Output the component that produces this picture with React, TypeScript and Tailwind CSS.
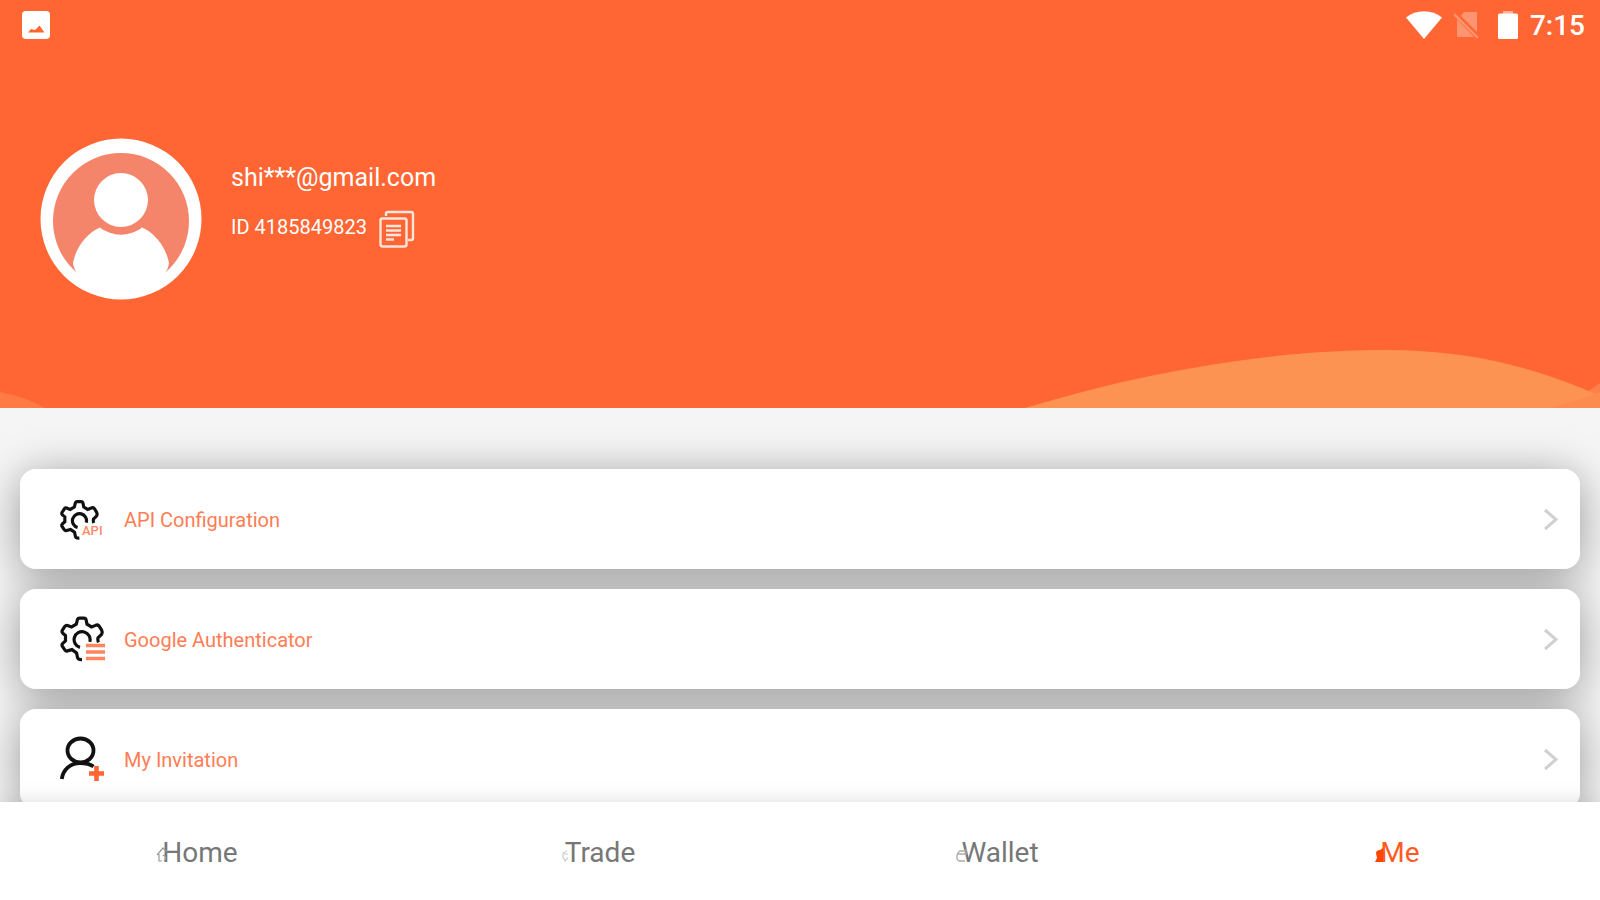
import type { ReactNode } from "react";

const GEAR =
  "M38.500 28Q37.500 26 38 23.500L41.500 20Q42.800 18 41.500 15.500L39 11.500Q37.500 10 35.500 11L31.500 12.500L27 9.800L26 5Q25.500 3.700 24 3.700H19.500Q18 3.700 17.500 5L16.300 9.800L11.500 12.500L7.500 11Q6 10.500 5 11.800L2.300 16Q1.500 17.500 2.800 18.800L5.500 21V26.500L2.800 29Q1.500 30.300 2.300 31.800L4.800 35.500Q5.800 37 7.500 36.500L12 35.200L16.500 38.500L17.500 43Q18 45.500 22 45.200M20 33A8 8 0 1 1 29.800 27.500";

function ApiIcon() {
  return (
    <svg viewBox="0 0 46 46" className="size-[46px]" aria-hidden="true">
      <path d={GEAR} transform="translate(0 2.4) scale(.88)" fill="none" stroke="#111" strokeWidth="3.6" />
      <path d="M22 28H46V46H22z" fill="#fff" />
      <text x="22" y="39" fontSize="13" fontFamily="Roboto, sans-serif" fontWeight="500" fill="#ff8a66">
        API
      </text>
    </svg>
  );
}

function AuthenticatorIcon() {
  return (
    <svg viewBox="0 0 46 46" className="size-[46px]" aria-hidden="true">
      <path d={GEAR} transform="translate(0 -1.6)" fill="none" stroke="#111" strokeWidth="3.2" />
      <path d="M26 29.500H45M26 36H45M26 42.500H45" stroke="#ff8560" strokeWidth="3.4" />
    </svg>
  );
}

function InvitationIcon() {
  return (
    <svg viewBox="0 0 46 46" className="size-[46px]" aria-hidden="true">
      <g fill="none" stroke="#111" strokeWidth="3.8">
        <ellipse cx="20.500" cy="14.500" rx="13" ry="12" />
        <path d="M1.800 43C3 34 10 27 20 27c6 0 10 1 13.500 3.500" />
      </g>
      <path d="M36.500 30V45M29 37.500H44" stroke="#ff6633" strokeWidth="4.6" />
    </svg>
  );
}

const rows: { label: string; icon: ReactNode }[] = [
  { label: "API Configuration", icon: <ApiIcon /> },
  { label: "Google Authenticator", icon: <AuthenticatorIcon /> },
  { label: "My Invitation", icon: <InvitationIcon /> },
];

const tabs: { label: string; active?: boolean; icon: ReactNode }[] = [
  {
    label: "Home",
    icon: <path d="M1 10 7 3l4 4M3 9v7h3M8 16c4-3 0-7-1-5" fill="none" stroke="#999" strokeWidth="1.2" />,
  },
  {
    label: "Trade",
    icon: <path d="M8 6 4 8v4l2 4 3-3M5 9h4" fill="none" stroke="#ccc" strokeWidth="1.2" />,
  },
  {
    label: "Wallet",
    icon: <path d="M9 6H5C1 8 1 15 4 16h6M3 9h8V4" fill="none" stroke="#aaa" strokeWidth="1.3" />,
  },
  {
    label: "Me",
    active: true,
    icon: <path d="M2 8c0-2 2-3 4-3l3-2v14H1l2-4z" fill="#ff4500" />,
  },
];

function StatusBar() {
  return (
    <div className="flex h-[50px] items-center justify-between pl-[22px] pr-[15px] text-white">
      <svg viewBox="0 0 28 28" className="size-7" aria-label="Screenshot saved" role="img">
        <rect width="28" height="28" rx="4" fill="#fff" />
        <path d="M6 21.500l3-3.500 4 1 4.500-4.500 5 7z" fill="#ff6633" />
      </svg>
      <div className="flex items-center">
        <svg viewBox="0 0 36 28" className="mr-3 h-7 w-9" aria-hidden="true">
          <path d="M0 6.500C10-2 26-2 36 6.500L18 28z" fill="#fff" />
        </svg>
        <svg viewBox="0 0 28 28" className="mr-4 h-7 w-7" aria-hidden="true">
          <path d="M10 1H23V21L7 5zM3 8V26H20z" fill="#ff9470" />
          <path d="M0 3 24 27" stroke="#ff9470" strokeWidth="2.400" />
        </svg>
        <svg viewBox="0 0 20 28" className="mr-3 h-7 w-5" aria-hidden="true">
          <path d="M5 0h10v3H5z" fill="#ffb199" />
          <rect y="2.500" width="20" height="25.500" rx="1.500" fill="#fff" />
        </svg>
        <span className="pt-0.5 text-[28px] leading-8 font-medium">7:15</span>
      </div>
    </div>
  );
}

function Avatar() {
  return (
    <svg viewBox="0 0 162 162" className="size-[162px] shrink-0" role="img" aria-label="Profile picture">
      <circle cx="81" cy="81" r="80.500" fill="#fff" />
      <circle cx="81" cy="83" r="68" fill="#f4856a" />
      <circle cx="81" cy="62" r="27" fill="#fff" />
      <path
        d="M33 125C36 109 47 95 60 89.500C72 99 90 99 102 89.500C115 95 126 109 129 125C127 142 104 155 81 155S35 142 33 125z"
        fill="#fff"
      />
    </svg>
  );
}

export default function App() {
  return (
    <div className="flex h-screen flex-col overflow-hidden bg-[#f5f5f5] font-['Roboto',sans-serif]">
      <header className="flex shrink-0 flex-col bg-[#ff6633]">
        <StatusBar />
        <div className="flex items-start gap-[29px] pt-[88px] pb-[50px] pl-10 text-white">
          <Avatar />
          <div className="flex flex-col gap-3 pt-6">
            <h1 className="text-[25px] leading-8 font-normal">shi***@gmail.com</h1>
            <div className="flex items-center gap-3">
              <p className="text-[20px] leading-6">ID 4185849823</p>
              <button type="button" aria-label="Copy ID" className="pt-1">
                <svg viewBox="0 0 36 38" className="h-[38px] w-9" fill="none" stroke="#ffe5dc" strokeWidth="2.400" aria-hidden="true">
                  <path d="M7 6V3.500Q7 2 9 2H32Q34 2 34 4V28Q34 30 32 30H29" />
                  <rect x="1.500" y="8.500" width="26" height="28" rx="2" />
                  <path d="M7 16H22M7 20.500H22M7 25H22M7 29.500H15" />
                </svg>
              </button>
            </div>
          </div>
        </div>
        <div className="-mt-1">
          <svg viewBox="0 0 1600 62" preserveAspectRatio="none" className="block h-[62px] w-full" aria-hidden="true">
            <path d="M0 46Q26 51 45 62H0z" fill="#ff7a45" />
            <path d="M1550 62Q1582 51 1600 37V62z" fill="#ff7f4c" />
            <path d="M1025 62C1150 24 1275 4 1385 4C1465 4 1530 19 1600 50V62z" fill="#fd9353" />
            <path d="M1550 62Q1580 54 1600 46V62z" fill="#fd8b4f" />
          </svg>
        </div>
      </header>

      <main className="min-h-0 flex-1 overflow-hidden px-5 pt-[61px]">
        <ul className="flex flex-col gap-5">
          {rows.map((row) => (
            <li key={row.label} className="rounded-2xl shadow-[0_6px_44px_rgba(0,0,0,0.38)]">
              <button
                type="button"
                className="relative z-10 flex h-[100px] w-full items-center rounded-2xl bg-white pr-5 pl-10 text-left"
              >
                {row.icon}
                <span className="ml-[18px] flex-1 pt-px text-[20px] leading-6 text-[#ff7d55]">{row.label}</span>
                <svg viewBox="0 0 18 24" className="h-6 w-[18px]" fill="none" stroke="#d0d0d0" strokeWidth="3" aria-hidden="true">
                  <path d="M3 3 14 12.500 3 22" />
                </svg>
              </button>
            </li>
          ))}
        </ul>
      </main>

      <nav className="relative z-20 grid h-[98px] shrink-0 grid-cols-4 bg-white shadow-[0_0_20px_rgba(0,0,0,0.14)]">
        {tabs.map((tab) => (
          <a
            key={tab.label}
            href="#"
            aria-current={tab.active ? "page" : undefined}
            className={
              tab.active
                ? "flex items-center justify-center pt-1 text-[28px] leading-8 text-[#ff5a1f]"
                : "flex items-center justify-center pt-1 text-[28px] leading-8 text-[#777]"
            }
          >
            <span className="relative">
              <svg viewBox="0 0 12 18" className="absolute top-2 -left-1.5 h-[18px] w-3" aria-hidden="true">
                {tab.icon}
              </svg>
              {tab.label}
            </span>
          </a>
        ))}
      </nav>
    </div>
  );
}
